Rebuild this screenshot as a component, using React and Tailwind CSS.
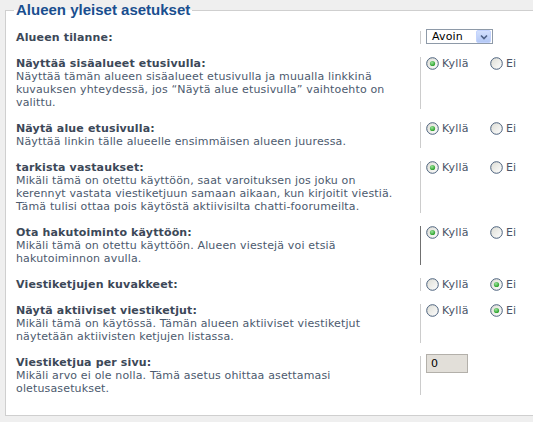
import React from "react";

const rows = [
  {
    label: "Näyttää sisäalueet etusivulla:",
    desc: [
      "Näyttää tämän alueen sisäalueet etusivulla ja muualla linkkinä",
      "kuvauksen yhteydessä, jos “Näytä alue etusivulla” vaihtoehto on",
      "valittu.",
    ],
    type: "radio",
    yes: true,
  },
  {
    label: "Näytä alue etusivulla:",
    desc: ["Näyttää linkin tälle alueelle ensimmäisen alueen juuressa."],
    type: "radio",
    yes: true,
  },
  {
    label: "tarkista vastaukset:",
    desc: [
      "Mikäli tämä on otettu käyttöön, saat varoituksen jos joku on",
      "kerennyt vastata viestiketjuun samaan aikaan, kun kirjoitit viestiä.",
      "Tämä tulisi ottaa pois käytöstä aktiivisilta chatti-foorumeilta.",
    ],
    type: "radio",
    yes: true,
  },
  {
    label: "Ota hakutoiminto käyttöön:",
    desc: [
      "Mikäli tämä on otettu käyttöön. Alueen viestejä voi etsiä",
      "hakutoiminnon avulla.",
    ],
    type: "radio",
    yes: true,
    hover: true,
  },
  {
    label: "Viestiketjujen kuvakkeet:",
    desc: [],
    type: "radio",
    yes: false,
  },
  {
    label: "Näytä aktiiviset viestiketjut:",
    desc: [
      "Mikäli tämä on käytössä. Tämän alueen aktiiviset viestiketjut",
      "näytetään aktiivisten ketjujen listassa.",
    ],
    type: "radio",
    yes: false,
  },
  {
    label: "Viestiketjua per sivu:",
    desc: [
      "Mikäli arvo ei ole nolla. Tämä asetus ohittaa asettamasi",
      "oletusasetukset.",
    ],
    type: "number",
  },
];

const Radio = ({ checked }) => (
  <svg width="13" height="13" viewBox="0 0 13 13" className="shrink-0">
    <defs>
      <linearGradient id="rbg" x1="0" y1="0" x2="1" y2="1">
        <stop offset="0" stopColor="#dcdcd4" />
        <stop offset="1" stopColor="#ffffff" />
      </linearGradient>
      <radialGradient id="rdot" cx="0.4" cy="0.35" r="0.7">
        <stop offset="0" stopColor="#9be39b" />
        <stop offset="1" stopColor="#1f9a1f" />
      </radialGradient>
    </defs>
    <circle cx="6.5" cy="6.5" r="5.8" fill="url(#rbg)" stroke="#4a607c" strokeWidth="1" />
    {checked && <circle cx="6.5" cy="6.5" r="2.6" fill="url(#rdot)" />}
  </svg>
);

const YesNo = ({ yes }) => (
  <div className="flex items-center h-[13px]">
    <label className="flex items-center gap-[3px] w-[64px]">
      <Radio checked={yes} />
      <span>Kyllä</span>
    </label>
    <label className="flex items-center gap-[3px]">
      <Radio checked={!yes} />
      <span>Ei</span>
    </label>
  </div>
);

const Select = () => (
  <div className="-mt-[2px] w-[67px] h-[15px] border border-[#8e9aa8] bg-white flex items-center justify-between text-black">
    <span className="pl-[5px] leading-[13px]">Avoin</span>
    <span className="w-[15px] h-[13px] mr-px bg-gradient-to-b from-[#d3e0fd] to-[#b3c8f5] border border-[#c3d3fd] rounded-[2px] flex items-center justify-center">
      <svg width="8" height="6" viewBox="0 0 8 6">
        <path d="M1 1.5 L4 4.5 L7 1.5" fill="none" stroke="#4d6185" strokeWidth="1.6" />
      </svg>
    </span>
  </div>
);

export default function App() {
  return (
    <div className="w-full h-[422px] overflow-hidden bg-[#efefef] font-['DejaVu_Sans',Verdana,sans-serif] text-[11px] leading-[13px] tracking-[0.15px]">
      <fieldset className="ml-[5px] w-[560px] h-[416px] border border-[#cfcfcf] bg-white pl-[8px] pt-[11px]">
        <legend className="px-[2px] font-['Liberation_Sans',Arial,sans-serif] font-bold text-[15px] leading-[20px] tracking-normal text-[#1a4f8f]">
          Alueen yleiset asetukset
        </legend>
        <div className="flex flex-col gap-[13px] pl-[2px]">
          <div className="flex">
            <div className="w-[405px] border-r border-[#cccccc] font-bold text-[#3c4858]">Alueen tilanne:</div>
            <div className="pl-[5px] h-[13px]">
              <Select />
            </div>
          </div>
          {rows.map((r, i) => (
            <div key={i} className="flex">
              <div className={`w-[405px] border-r ${r.hover ? "border-[#707070]" : "border-[#cccccc]"}`}>
                <div className="font-bold text-[#3c4858]">{r.label}</div>
                {r.desc.map((d, j) => (
                  <div key={j} className="text-[#4c5a6e] whitespace-nowrap">{d}</div>
                ))}
              </div>
              <div className="pl-[5px] text-[#4a5468]">
                {r.type === "radio" ? (
                  <YesNo yes={r.yes} />
                ) : (
                  <div className="-mt-[2px] w-[42px] h-[19px] bg-[#e2dfd9] border border-[#b3b0aa] text-black pl-[4px] flex items-center">0</div>
                )}
              </div>
            </div>
          ))}
        </div>
      </fieldset>
    </div>
  );
}
